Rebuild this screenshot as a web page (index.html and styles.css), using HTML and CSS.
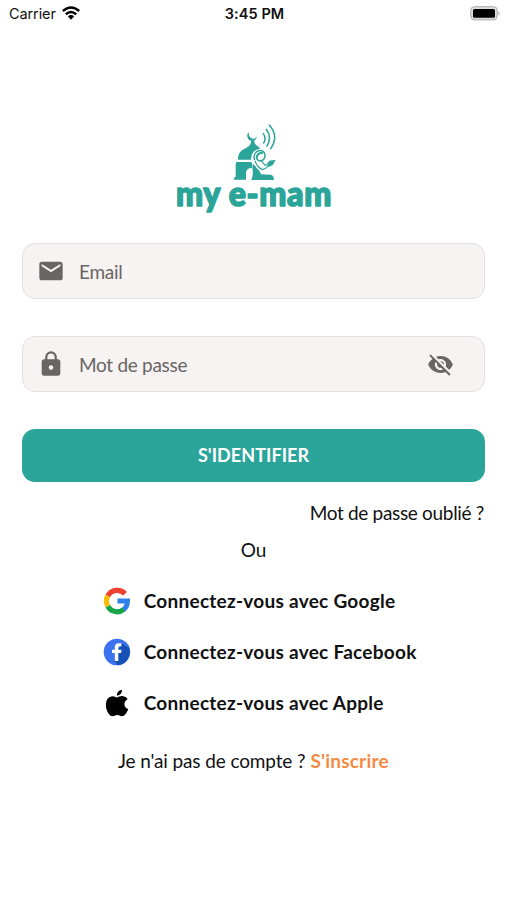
FILE: index.html
```html
<!DOCTYPE html>
<html lang="fr">
<head>
<meta charset="utf-8">
<meta name="viewport" content="width=device-width">
<title>my e-mam</title>
<link rel="stylesheet" href="styles.css">
</head>
<body>
<header class="status">
  <div class="carrier"><span>Carrier</span>
    <svg width="18" height="14" viewBox="0 0 18 14" fill="none" stroke="#000" stroke-width="2.5"><path d="M.8 5Q9-2 17.2 5M3.8 8.2Q9 3.8 14.2 8.2"/><path d="M5.8 10.3Q9 7.6 12.2 10.3L9 13.7Z" fill="#000" stroke="none"/></svg>
  </div>
  <time class="time">3:45 PM</time>
  <svg class="battery" width="31" height="15" viewBox="0 0 31 15"><rect x=".7" y=".7" width="26.6" height="13.2" rx="4" fill="#ddd" stroke="#aaa"/><rect x="3" y="3" width="22" height="8.8" rx="1.5"/><path d="M28.5 5Q30.8 7.3 28.5 9.6Z" fill="#aaa"/></svg>
</header>
<main class="login">
  <div class="logo">
    <svg width="50" height="60" viewBox="190 20 150 180" fill="#2ba599">
      <path d="M249 51A15 15 0 1 0 274 66L268 68Q264 73 258 69Q250 67 249 51Z"/>
      <path d="M257 72H265Q265 86 274 91Q282 96 283 100Q257 104 256 133H217Q216 115 229 105Q238 99 247 94Q257 89 257 72Z"/>
      <path d="M212 140H258Q263 150 259 158Q243 157 241 172V193H205V188L210 184V148Z"/>
      <path d="M257 194Q263 179 261 165Q259 154 264 145Q271 158 281 166L286 177L316 178Q325 181 325 194Z"/>
      <g fill="none" stroke="#2ba599" stroke-linecap="round" stroke-linejoin="round"><path d="M268 137Q275 157 291 163Q299 161 310 151M288 138L299 151L314 137" stroke-width="3.5"/><path d="M266 132C260 101 299 98 298 121Q297 136 284 137Q274 136 273 128" stroke-width="4.5"/><path d="M273 127Q275 112 289 113" stroke-width="6"/><path d="M293 55Q303 69 294 83M302 42Q320 66 304 92M311 29Q341 64 315 100" stroke-width="4.6"/></g>
      <path d="M304 151L313 136L330 133L322 148L312 154Z"/>
    </svg>
    <svg class="wordmark" width="160" height="42" viewBox="0 0 160 42"><text x="2" y="30" textLength="156" lengthAdjust="spacingAndGlyphs">my e-mam</text></svg>
  </div>
  <div class="field">
    <svg width="28" height="28" viewBox="0 0 24 24"><path d="M20 4H4C2.9 4 2 4.9 2 6v12c0 1.1.9 2 2 2h16c1.1 0 2-.9 2-2V6c0-1.1-.9-2-2-2zm0 4-8 5-8-5V6l8 5 8-5z"/></svg>
    <span class="hint email">Email</span>
  </div>
  <div class="field">
    <svg width="28" height="28" viewBox="0 0 24 24"><path d="M18 8h-1V6A5 5 0 0 0 7 6v2H6c-1.1 0-2 .9-2 2v10c0 1.1.9 2 2 2h12c1.1 0 2-.9 2-2V10c0-1.1-.9-2-2-2zm-6 9a2 2 0 1 1 0-4 2 2 0 0 1 0 4zM8.9 8V6a3.1 3.1 0 0 1 6.2 0v2z"/></svg>
    <span class="hint pass">Mot de passe</span>
    <svg class="eye" width="27" height="27" viewBox="0 0 24 24"><path d="M12 7c2.76 0 5 2.24 5 5 0 .65-.13 1.26-.36 1.83l2.92 2.92c1.51-1.26 2.7-2.89 3.43-4.75-1.73-4.39-6-7.5-11-7.5-1.4 0-2.74.25-3.98.7l2.16 2.16C10.74 7.13 11.35 7 12 7zM2 4.27l2.28 2.28.46.46A11.8 11.8 0 0 0 1 12c1.73 4.39 6 7.5 11 7.5 1.55 0 3.03-.3 4.38-.84l.42.42L19.73 22 21 20.73 3.27 3 2 4.27zM7.53 9.8l1.55 1.55A3 3 0 0 0 12 15c.22 0 .44-.03.65-.08l1.55 1.55A5 5 0 0 1 7.53 9.8zm4.31-.78 3.15 3.15.02-.16a3 3 0 0 0-3.17-2.99z"/></svg>
  </div>
  <button class="submit"><span>S'IDENTIFIER</span></button>
  <a class="forgot">Mot de passe oublié ?</a>
  <div class="or">Ou</div>
  <div class="socials">
    <a class="social google"><svg width="28" height="28" viewBox="0 0 28 28" fill="none" stroke-width="5.2"><path d="M4.8 9A10.7 10.7 0 0 1 22 6.7" stroke="#ef4130"/><path d="M4.8 19.2A10.7 10.7 0 0 1 4.8 8.8" stroke="#fbbc05"/><path d="M21 22.3A10.7 10.7 0 0 1 4.8 19.2" stroke="#18a448"/><path d="M14.5 14H24.5Q24.5 19.5 20.6 22.4" stroke="#3182e8" stroke-width="5"/></svg><span>Connectez-vous avec Google</span></a>
    <a class="social facebook"><svg width="28" height="28" viewBox="0 0 28 28"><circle cx="14" cy="14" r="13.3" fill="#3c72ee"/><path d="M18 5L26 10A13.3 13.3 0 0 1 15 27.2L11 23Z" fill="#1750b4"/><path d="M11.8 23V15H9V11.8H11.8V9.2Q11.8 5.2 16 5.2H18.4V8.3H17Q15.3 8.3 15.3 9.8V11.8H18.5L18 15H15.3V23Z" fill="#fff"/></svg><span>Connectez-vous avec Facebook</span></a>
    <a class="social apple"><svg width="28" height="28" viewBox="0 0 28 28"><path d="M14 8.4C16 8.1 17.2 6.8 20 7.2Q23 7.5 24.7 10C20 13 20.6 18.3 25.2 20.2C23.7 24 21.4 27.2 19 27.2C17 27.2 16.4 26 14.2 26C12 26 11.2 27.3 9.5 27.3C6 27.3 2.9 20.8 2.9 16.2C2.9 10.5 6 7.4 9.5 7.3C11.4 7.3 13 8.4 14 8.4ZM13.8 6.7Q13.8 1.8 19 .8Q19.2 5.9 13.8 6.7Z"/></svg><span>Connectez-vous avec Apple</span></a>
  </div>
  <p class="signup"><span class="question">Je n'ai pas de compte ?</span><a class="register">S'inscrire</a></p>
</main>
</body>
</html>
```
FILE: styles.css
```css
* { box-sizing: border-box; }
body { margin: 0; height: 900px; overflow: hidden; background: #fff; color: #111; font: 19px/26px Lato, sans-serif; }
svg { flex: none; display: block; }
.status { height: 28px; display: grid; grid-template-columns: 1fr auto 1fr; align-items: center; padding: 0 6px 0 9px; font: 14.5px/28px Inter, sans-serif; }
.carrier { display: flex; align-items: center; gap: 6px; letter-spacing: -.1px; }
.carrier svg { margin-top: -2px; }
.time { font-weight: 600; letter-spacing: .1px; margin-right: 1px; }
.battery { justify-self: end; margin-top: -2px; }
.login { padding: 94px 22px 0; display: flex; flex-direction: column; }
.logo { height: 121px; display: flex; flex-direction: column; align-items: center; }
.wordmark { margin-top: -6px; overflow: visible; font: 900 34px Lato, sans-serif; fill: #2ba599; stroke: #2ba599; stroke-width: 1.6px; stroke-linejoin: round; letter-spacing: .7px; }
.field { height: 56px; display: flex; align-items: center; padding: 0 30px 0 14px; margin: 0 0 37px; background: #f7f3f3; border: 1.5px solid #e1e0e2; border-radius: 13px; color: #696563; }
.field svg { fill: #696563; }
.hint { margin-left: 14px; padding-top: 1px; letter-spacing: -.3px; }
.eye { margin-left: auto; }
.submit { height: 53px; border: 0; border-radius: 13px; padding: 0; background: #2ba599; color: #fff; font: 700 18px/53px Lato, sans-serif; letter-spacing: .05px; }
.forgot { align-self: flex-end; margin: 17.5px 1px 0 0; letter-spacing: -.32px; }
.or { text-align: center; margin-top: 11px; }
.socials { margin: 24px 0 0 81px; display: grid; gap: 23px; }
.social { height: 28px; display: flex; align-items: center; gap: 12.7px; font-weight: 700; color: #111; white-space: nowrap; letter-spacing: .27px; }
.social span { padding-top: 1px; }
.signup { margin: 31.5px 0 0 96px; display: flex; gap: 5px; white-space: nowrap; }
.question { letter-spacing: -.12px; }
.register { color: #f58b43; font-weight: 700; letter-spacing: .2px; }
```
